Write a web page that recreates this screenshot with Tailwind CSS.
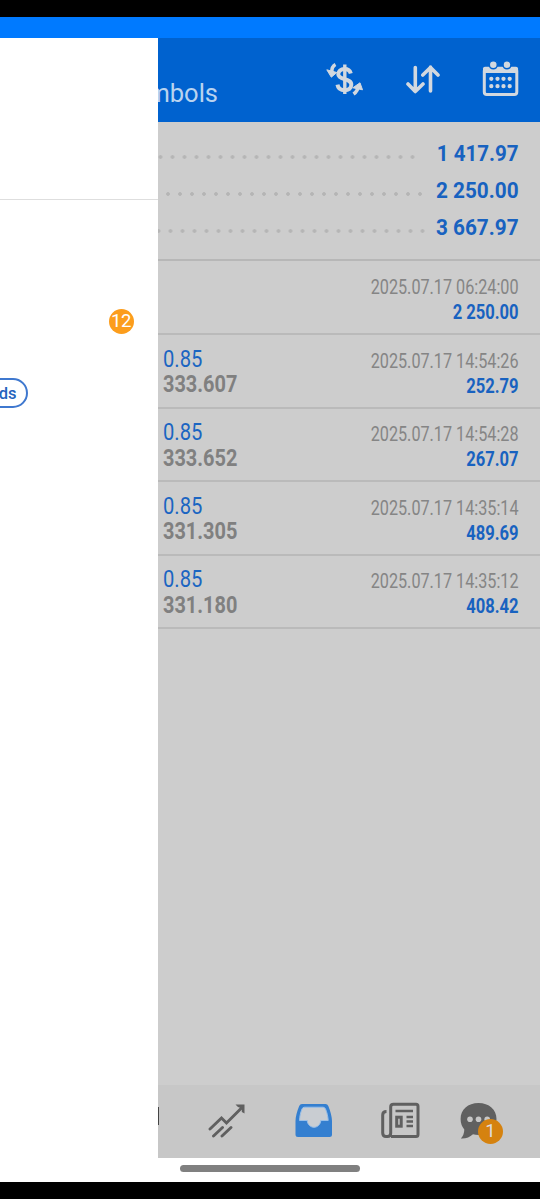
<!DOCTYPE html>
<html lang="en">
  <head>
    <meta charset="UTF-8">
    <meta name="viewport" content="width=device-width, initial-scale=1.0">
    <title>History</title>
    <script src="https://cdn.jsdelivr.net/npm/@tailwindcss/browser@4"></script>
  </head>

  <body class="bg-black font-['Roboto',sans-serif]">

    <div class="flex flex-col w-[540px] h-[1199px] overflow-hidden">
      <!-- Status bar -->
      <div class="h-[17px] shrink-0 bg-black"></div>
      <div class="h-[21px] shrink-0 bg-[#007aff]"></div>

      <div class="flex h-[1120px] shrink-0">
        <!-- Drawer -->
        <aside class="w-[157.5px] shrink-0 bg-white overflow-hidden">
          <div class="h-[162px] border-b border-[#dedede]"></div>
          <div class="flex justify-end pt-[108.5px] pr-[24px]">
            <span class="size-[25px] rounded-full bg-[#fc9d1c] text-white text-[18.5px] leading-[25px] text-center tracking-[-0.3px]">12</span>
          </div>
          <div class="-ml-[40px] mt-[44px] w-[67.5px] h-[30px] rounded-full border-2 border-[#3f78cf] text-[#2463bd] text-[16.5px] font-medium leading-[27px] text-right pr-[9px]">ds</div>
        </aside>

        <!-- History -->
        <main class="flex flex-1 min-w-0 flex-col bg-[#cdcdcd]">
          <header class="flex h-[83.5px] shrink-0 bg-[#0062cf] overflow-hidden">
            <div class="w-[60.5px] flex justify-end pt-[37px] text-[25.5px] leading-[36px] text-[#b9d3ef] overflow-hidden"><span>Symbols</span></div>
            <div class="flex flex-1 justify-end gap-[42px] pt-[22px] pr-[20px] text-[#d2d8df]">
              <svg class="w-[38px] h-[40px]" viewBox="0 0 38 40" fill="none" stroke="currentColor">
                <path d="M24.800 13.500C24 10.500 21.500 9 18.500 9C14.800 9 12.300 11.200 12.300 14.300C12.300 20.500 25.300 17.800 25.300 24.800C25.300 28.300 22.300 30.200 18.800 30.200C14.800 30.200 12 28 11.500 24.600" stroke-width="4"/>
                <path d="M18.800 4.500V34" stroke-width="3.400"/>
                <path d="M9.500 4.500Q5.500 6.500 5.800 12.500" stroke-width="3.600"/>
                <path d="M.8 9.800L10.800 12.500L5.300 17.200Z" fill="currentColor" stroke="currentColor" stroke-width="1" stroke-linejoin="round"/>
                <path d="M27.500 34Q32 31 32 26" stroke-width="3.600"/>
                <path d="M26.800 27.800L34 22.800L36.500 29.800Z" fill="currentColor" stroke="currentColor" stroke-width="1" stroke-linejoin="round"/>
              </svg>
              <svg class="w-[34px] h-[40px]" viewBox="0 0 34 40" fill="none" stroke="currentColor" stroke-width="3.600" stroke-linecap="round" stroke-linejoin="round">
                <path d="M9.300 7.500V31.500M2 24L9.300 31.500L17 24M24.500 31V7M16.800 15L24.500 7.500L32 15"/>
              </svg>
              <svg class="w-[38px] h-[40px]" viewBox="0 0 38 40" fill="none" stroke="currentColor">
                <rect x="2.300" y="8.500" width="32.500" height="26" rx="2.500" stroke-width="3"/>
                <path d="M1 8.500Q1 6.700 3 6.700H34Q36 6.700 36 8.500V13H1Z" fill="currentColor" stroke="none"/>
                <g fill="currentColor" stroke="#0062cf" stroke-width="1.500">
                  <circle cx="11.300" cy="4.800" r="4"/><circle cx="25" cy="4.800" r="4"/>
                </g>
                <path d="M9.300 18.800h0M15.500 18.800h0M21.500 18.800h0M27.700 18.800h0M9.300 26.200h0M15.500 26.200h0M21.500 26.200h0M27.700 26.200h0" stroke-width="4.300" stroke-linecap="round"/>
              </svg>
            </div>
          </header>

          <!-- Totals -->
          <section class="flex h-[139.500px] shrink-0 flex-col pt-[13px] pr-[21px] border-b-2 border-[#b7b7b7] text-[#1862c0] text-[21.5px] leading-[37.400px] font-bold">
            <div class="flex h-[37.400px] items-center justify-between">
              <div class="mt-[7px] w-[260.500px] h-[6px] bg-[radial-gradient(circle,#b5b5b5_1.500px,transparent_2.200px)] bg-[size:12px_6px] bg-right"></div>
              <span class="origin-right scale-x-[0.955]">1 417.97</span>
            </div>
            <div class="flex h-[37.400px] items-center justify-between">
              <div class="ml-[3px] mt-[7px] w-[265px] h-[6px] bg-[radial-gradient(circle,#b5b5b5_1.500px,transparent_2.200px)] bg-[size:12px_6px] bg-right"></div>
              <span class="origin-right scale-x-[0.965]">2 250.00</span>
            </div>
            <div class="flex h-[37.400px] items-center justify-between">
              <div class="mt-[7px] w-[270.500px] h-[6px] bg-[radial-gradient(circle,#b5b5b5_1.500px,transparent_2.200px)] bg-[size:12px_6px] bg-right"></div>
              <span class="origin-right scale-x-[0.965]">3 667.97</span>
            </div>
          </section>

          <!-- Deals -->
          <section class="flex flex-1 flex-col">
            <div class="flex h-[74px] justify-between border-b-2 border-[#bababa] pl-[5px] pr-[21px] pt-[12.500px]">
              <div></div>
              <div class="flex flex-col items-end leading-[26px]">
                <span class="origin-right scale-x-[0.81] text-[20px] text-[#858585]">2025.07.17 06:24:00</span>
                <span class="origin-right scale-x-[0.85] text-[19.5px] font-bold text-[#1862c0]">2 250.00</span>
              </div>
            </div>
            <div class="flex h-[73.500px] justify-between border-b-2 border-[#bababa] pl-[5px] pr-[21px] pt-[12.500px]">
              <div class="-mt-[1px] flex flex-col items-start leading-[25.500px]">
                <span class="origin-left scale-x-[0.84] text-[24px] text-[#1b65c2]">0.85</span>
                <span class="origin-left scale-x-[0.83] text-[24px] font-bold text-[#808080]">333.607</span>
              </div>
              <div class="flex flex-col items-end leading-[26px]">
                <span class="origin-right scale-x-[0.81] text-[20px] text-[#858585]">2025.07.17 14:54:26</span>
                <span class="origin-right scale-x-[0.85] text-[19.5px] font-bold text-[#1862c0]">252.79</span>
              </div>
            </div>
            <div class="flex h-[73.500px] justify-between border-b-2 border-[#bababa] pl-[5px] pr-[21px] pt-[12.500px]">
              <div class="-mt-[1px] flex flex-col items-start leading-[25.500px]">
                <span class="origin-left scale-x-[0.84] text-[24px] text-[#1b65c2]">0.85</span>
                <span class="origin-left scale-x-[0.83] text-[24px] font-bold text-[#808080]">333.652</span>
              </div>
              <div class="flex flex-col items-end leading-[26px]">
                <span class="origin-right scale-x-[0.81] text-[20px] text-[#858585]">2025.07.17 14:54:28</span>
                <span class="origin-right scale-x-[0.85] text-[19.5px] font-bold text-[#1862c0]">267.07</span>
              </div>
            </div>
            <div class="flex h-[73.500px] justify-between border-b-2 border-[#bababa] pl-[5px] pr-[21px] pt-[12.500px]">
              <div class="-mt-[1px] flex flex-col items-start leading-[25.500px]">
                <span class="origin-left scale-x-[0.84] text-[24px] text-[#1b65c2]">0.85</span>
                <span class="origin-left scale-x-[0.83] text-[24px] font-bold text-[#808080]">331.305</span>
              </div>
              <div class="flex flex-col items-end leading-[26px]">
                <span class="origin-right scale-x-[0.81] text-[20px] text-[#858585]">2025.07.17 14:35:14</span>
                <span class="origin-right scale-x-[0.85] text-[19.5px] font-bold text-[#1862c0]">489.69</span>
              </div>
            </div>
            <div class="flex h-[73.500px] justify-between border-b-2 border-[#bababa] pl-[5px] pr-[21px] pt-[12.500px]">
              <div class="-mt-[1px] flex flex-col items-start leading-[25.500px]">
                <span class="origin-left scale-x-[0.84] text-[24px] text-[#1b65c2]">0.85</span>
                <span class="origin-left scale-x-[0.83] text-[24px] font-bold text-[#808080]">331.180</span>
              </div>
              <div class="flex flex-col items-end leading-[26px]">
                <span class="origin-right scale-x-[0.81] text-[20px] text-[#858585]">2025.07.17 14:35:12</span>
                <span class="origin-right scale-x-[0.85] text-[19.5px] font-bold text-[#1862c0]">408.42</span>
              </div>
            </div>
          </section>

          <!-- Tabs -->
          <nav class="flex h-[73px] shrink-0 items-start bg-[#c7c7c7] pt-[16px] text-[#606060]">
            <div class="mt-[6px] h-[18px] w-[1.500px] bg-[#444]"></div>
            <svg class="ml-[49px] w-[38px] h-[40px]" viewBox="0 0 38 40" fill="none" stroke="currentColor" stroke-width="2.900" stroke-linecap="round">
              <path d="M2 28L13.500 17L18.500 22L34 6.500M5.500 35L14.500 26.500M14 35L23 26.500"/>
              <path d="M27.500 3.500H36.500V12.500L33.800 11V7.500L30 6Z" fill="currentColor" stroke="none"/>
            </svg>
            <svg class="ml-[48.500px] w-[38px] h-[40px]" viewBox="0 0 38 40">
              <path d="M7 3H30.500Q32.500 3 33.300 5C35.500 10 37 16 37 20V33.500Q37 36 34.500 36H3Q.5 36 .5 33.500V20C.5 16 2 10 4.200 5Q5 3 7 3Z" fill="#347fd0"/>
              <path d="M9.500 6.200H28Q29.800 6.200 30.500 8C32 11.500 33 15.500 33.200 19.500H25.800C25 28.500 13 28.500 12.200 19.500H4.500C4.700 15.500 5.500 11.500 7 8Q7.700 6.200 9.500 6.200Z" fill="#c9cdd2" stroke="#98bfe9" stroke-width="1"/>
            </svg>
            <svg class="ml-[48px] w-[40px] h-[40px]" viewBox="0 0 40 40" fill="none" stroke="currentColor" stroke-width="3">
              <path d="M10 35.500H35Q37 35.500 37 33.500V5.500Q37 3.300 35 3.300H12.500Q9.700 3.300 9.700 6V32Q9.700 35.500 6.500 35.500H5Q1.700 35.500 1.700 32V14Q1.700 10.500 5.500 10.500"/>
              <path d="M14.500 10H32M25.500 16H32M25.500 20.500H32M25.500 25H32" stroke-width="2.600"/>
              <rect x="15.700" y="16.200" width="4.500" height="9" stroke-width="3"/>
            </svg>
            <div class="relative ml-[39px]">
              <svg class="w-[38px] h-[40px]" viewBox="0 0 38 40">
                <path d="M18.500 2C29 2 36.500 8.500 36.500 18S29 34 18.500 34Q15.500 34 13 33.300Q8 38 .8 37.500Q4.200 34 4.300 28.500Q.6 24 .6 18C.6 8.500 8 2 18.500 2Z" fill="currentColor"/>
                <g fill="#c7c7c7"><circle cx="10" cy="18.300" r="2.800"/><circle cx="18.500" cy="18.300" r="2.800"/><circle cx="27.200" cy="18.300" r="2.800"/></g>
              </svg>
              <span class="absolute left-[18.500px] top-[17.500px] size-[25px] rounded-full bg-[#d5820f] text-center text-[18.500px] leading-[24px] text-[#dedede]">1</span>
            </div>
          </nav>
        </main>
      </div>

      <!-- Gesture bar -->
      <div class="flex h-[23.500px] shrink-0 justify-center bg-white pt-[7px]">
        <div class="h-[6.500px] w-[180px] rounded-full bg-[#808080]"></div>
      </div>
    </div>

  </body>
</html>
